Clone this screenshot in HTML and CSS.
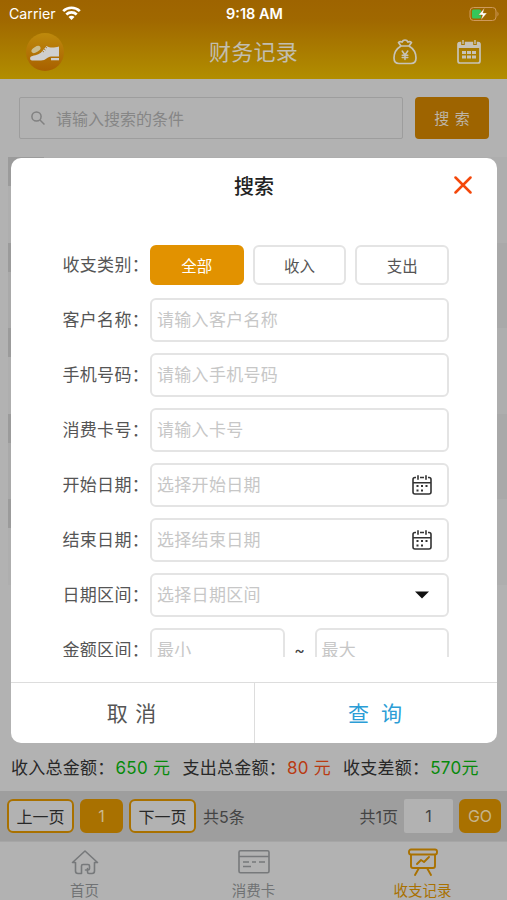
FILE: index.html
```html
<!DOCTYPE html>
<html lang="zh-CN">
<head>
<meta charset="utf-8">
<title>财务记录</title>
<link rel="stylesheet" href="styles.css">
</head>
<body>
<div class="app">
  <header class="top">
    <div class="status">
      <div class="carrier"><span>Carrier</span>
        <svg width="19" height="14" viewBox="0 0 19 14" fill="none" stroke="#fff" stroke-width="2.7"><path d="M1.2 5.1a11.9 11.9 0 0 1 16.6 0M4.3 8.5a7.5 7.5 0 0 1 10.4 0"/><path d="M9.5 14 6.5 11a4.2 4.2 0 0 1 6 0z" fill="#fff" stroke="none"/></svg>
      </div>
      <div class="clock">9:18 AM</div>
      <div class="battery">
        <svg width="31" height="16" viewBox="0 0 31 16"><rect x="1" y="1.5" width="26" height="13" rx="3.5" fill="none" stroke="#cf9a5c" stroke-width="1"/><path d="M28.5 5.5q2 2.500 0 5z" fill="#cf9a5c"/><rect x="3" y="3.500" width="9" height="9" rx="1.500" fill="#35c759"/><path d="m15.500 2-6 7h4l-1.500 5 6-7h-4z" fill="#fff" stroke="#a56a00" stroke-width=".4"/></svg>
      </div>
    </div>
    <div class="nav">
      <div class="logo">
        <svg width="38" height="38" viewBox="0 0 38 38"><defs><linearGradient id="g" x2="0" y2="1"><stop stop-color="#be8a0c"/><stop offset="1" stop-color="#a86000"/></linearGradient></defs><circle cx="19" cy="19" r="19" fill="url(#g)"/><path d="M5 23.500c4-1.500 8-1.500 11-5l4.500-5.500c3.500 2 7 2 12.500.5v10h-8c-3.500 0-5 4-10 4H6c-2 0-2.500-3-1-4z" fill="#cfcfcf"/><ellipse cx="10" cy="16.500" rx="5" ry="2.700" transform="rotate(-30 10 16.500)" fill="#cbbd8f"/><path d="M25 25h8v2.300h-8z" fill="#cfcfcf"/><path d="m16.500 18 1.500 1m0-3 1.500 1m0-3 1.500 1" stroke="#a86800" stroke-width=".8"/></svg>
      </div>
      <h1>财务记录</h1>
      <div class="actions">
        <svg width="24" height="26" viewBox="0 0 24 26" fill="none" stroke="#c7c3b7" stroke-width="1.700" stroke-linejoin="round" stroke-linecap="round"><path d="M8 7C3 10 1 15 1 19q0 5.500 5 5.500h12q5 0 5-5.500c0-4-2-9-7-12zM8 7 5.500 3.500q1.500-1.500 3.500-.5 1-2 3-2t3 2q2-1 3.500.5L16 7"/><path d="m9.200 12 2.800 4 2.800-4M12 16v4.500m-2.800-4.200h5.600m-5.600 2.100h5.600" stroke-width="1.500"/></svg>
        <svg width="24" height="24" viewBox="0 0 24 24"><rect x="1" y="2.500" width="22" height="20.500" rx="2" fill="none" stroke="#c7c3b7" stroke-width="1.700"/><path d="M1 2.500h22V8H1z" fill="#c7c3b7"/><path d="M6 0v5m12-5v5" stroke="#a87800" stroke-width="3.600"/><path d="M6 0v4m12-4v4" stroke="#c7c3b7" stroke-width="1.400"/><path d="M5 11h4v3H5zm5 0h4v3h-4zm5 0h4v3h-4zM5 15.500h4v3H5zm5 0h4v3h-4zm5 0h4v3h-4z" fill="#c7c3b7"/></svg>
      </div>
    </div>
  </header>
  <div class="searchbar">
    <div class="query"><svg width="14" height="14" viewBox="0 0 14 14" fill="none" stroke="#818181" stroke-width="1.500"><circle cx="5.500" cy="5.500" r="4.600"/><path d="m9 9 4.500 4.500"/></svg><span>请输入搜索的条件</span></div>
    <div class="search-btn">搜 索</div>
  </div>
  <main class="list">
    <div class="row"><i></i></div><div class="row alt"><i></i></div><div class="row"><i></i></div><div class="row alt"><i></i></div><div class="row"><i></i></div>
  </main>
  <div class="summary">
    <div class="income">收入总金额：<b class="green">650 元</b></div>
    <div class="expense">支出总金额：<b class="red">80 元</b></div>
    <div>收支差额：<b class="green">570元</b></div>
  </div>
  <div class="pager">
    <div class="page-btn">上一页</div><div class="page-btn current">1</div><div class="page-btn next">下一页</div>
    <span class="count">共5条</span><span class="total">共1页</span>
    <div class="page-input">1</div><div class="page-btn go">GO</div>
  </div>
  <footer class="tabs">
    <div class="tab"><svg width="28" height="26" viewBox="0 0 28 26" fill="none" stroke="#77797b" stroke-width="1.600" stroke-linejoin="round" stroke-linecap="round"><path d="M4.500 13.500h-3L14 2l12.500 11.500h-3V22q0 2.500-2.500 2.500h-3q-1.500 0-1.500-1.500v-3.500M4.500 13.500V22q0 2.500 2.500 2.500h3.500V17q0-1.500 1.500-1.500h5q1.500 0 1.500 1.500v2.500q0 1.500-1.500 1.500h-2.500"/></svg><span>首页</span></div>
    <div class="tab"><svg width="32" height="26" viewBox="0 0 32 26" fill="none" stroke="#77797b" stroke-width="1.600"><rect x="1" y="1.800" width="30" height="22" rx="1.500"/><path d="M1 7.500h30M5 13h6m3 0h4m3 0h6M5 17.500h8"/></svg><span>消费卡</span></div>
    <div class="tab active"><svg width="32" height="29" viewBox="0 0 32 29" fill="none" stroke="#a97100" stroke-width="1.900" stroke-linecap="round" stroke-linejoin="round"><rect x="2" y="1.500" width="28" height="5" rx="2"/><path d="M4 7v11q0 2 2 2h20q2 0 2-2V7M12 20l-4 7m12-7 4 7M10 16l4-4 3 2 5-5"/></svg><span>收支记录</span></div>
  </footer>

  <section class="dialog">
    <div class="dialog-head"><h2>搜索</h2>
      <svg class="close" width="18" height="18" viewBox="0 0 18 18" stroke="#f4480b" stroke-width="2.500" stroke-linecap="round"><path d="m1.500 1.500 15 15m0-15-15 15"/></svg>
    </div>
    <div class="form">
      <div class="field types"><label>收支类别：</label><div class="choices"><div class="choice selected">全部</div><div class="choice">收入</div><div class="choice">支出</div></div></div>
      <div class="field"><label>客户名称：</label><div class="input">请输入客户名称</div></div>
      <div class="field"><label>手机号码：</label><div class="input">请输入手机号码</div></div>
      <div class="field"><label>消费卡号：</label><div class="input">请输入卡号</div></div>
      <div class="field"><label>开始日期：</label><div class="input">选择开始日期<svg class="cal" width="20" height="20" viewBox="0 0 20 20" fill="none" stroke="#333" stroke-width="1.600"><path d="M4 2.500H3q-2 0-2 2V17q0 2 2 2h14q2 0 2-2V4.500q0-2-2-2h-1M8 2.500h4M1 7.800h18M6 .3v4.500M14 .3v4.500"/><path d="M4.500 11h2m2.500 0h2m2.500 0h2m-11 4.500h2m2.500 0h2" stroke-width="2"/></svg></div></div>
      <div class="field"><label>结束日期：</label><div class="input">选择结束日期<svg class="cal" width="20" height="20" viewBox="0 0 20 20" fill="none" stroke="#333" stroke-width="1.600"><path d="M4 2.500H3q-2 0-2 2V17q0 2 2 2h14q2 0 2-2V4.500q0-2-2-2h-1M8 2.500h4M1 7.800h18M6 .3v4.500M14 .3v4.500"/><path d="M4.500 11h2m2.500 0h2m2.500 0h2m-11 4.500h2m2.500 0h2" stroke-width="2"/></svg></div></div>
      <div class="field"><label>日期区间：</label><div class="input">选择日期区间<svg class="caret" width="14" height="8" viewBox="0 0 14 8"><path d="M0 .5h14L7 7.500z" fill="#111"/></svg></div></div>
      <div class="field"><label>金额区间：</label><div class="range"><div class="input">最小</div><span>~</span><div class="input">最大</div></div></div>
    </div>
    <div class="dialog-foot"><div class="cancel">取 消</div><div class="confirm">查 询</div></div>
  </section>
</div>
</body>
</html>
```
FILE: styles.css
```css
* { box-sizing: border-box; }
body { margin: 0; font-family: Inter, "Noto Sans CJK SC", sans-serif; }
h1, h2 { margin: 0; font-weight: 400; }
svg { display: block; flex: none; }
.app { position: relative; width: 507px; height: 900px; display: flex; flex-direction: column; background: #b2b2b2; overflow: hidden; white-space: nowrap; }

.top { height: 79px; flex: none; background: linear-gradient(#9e6400, #a06800 25%, #b28e00); }
.status { height: 28px; display: grid; grid-template-columns: 1fr auto 1fr; align-items: center; padding: 0 7px 0 9px; color: #fff; line-height: 20px; }
.carrier { display: flex; gap: 6px; align-items: center; font-size: 14.200px; }
.carrier svg { margin-top: -2px; }
.clock { font-size: 14.500px; font-weight: 600; }
.battery { display: flex; justify-content: flex-end; }
.nav { height: 48px; display: grid; grid-template-columns: 1fr auto 1fr; align-items: center; padding: 0 26px; }
.nav h1 { font-size: 22px; line-height: 30px; color: #c2beb0; letter-spacing: .3px; }
.actions { display: flex; justify-content: flex-end; align-items: center; gap: 40px; }

.searchbar { height: 78px; flex: none; display: flex; gap: 12px; padding: 18px 18px 0 19px; }
.query { flex: 1; height: 42px; border: 1px solid #9d9d9d; border-radius: 2px; display: flex; align-items: center; gap: 11px; padding-left: 11px; font-size: 16px; color: #868686; }
.query span, .search-btn { padding-bottom: 1px; }
.search-btn { width: 74px; height: 42px; border-radius: 4px; background: #9e6400; color: #bdb5a7; display: flex; align-items: center; justify-content: center; font-size: 15px; word-spacing: 1.500px; }

.list { height: 586px; flex: none; padding-left: 8px; background: #b2b2b2; }
.row { height: 85.500px; background: #aeaeae; }
.row.alt { background: #a9a9a9; }
.row i { display: block; width: 36px; height: 29px; background: #9b9b9b; }

.summary { height: 48px; flex: none; display: flex; align-items: center; padding: 0 0 2px 11px; font-size: 17px; color: #282828; letter-spacing: .25px; }
.summary b { font-weight: 400; margin-left: 1px; }
.income { width: 171.500px; }
.expense { width: 160.500px; }
.green { color: #078a0b; }
.red { color: #b93b13; }

.pager { height: 50px; flex: none; background: #9e9e9e; display: flex; align-items: center; gap: 6px; padding: 0 6px 0 7px; font-size: 16px; color: #444; }
.page-btn { width: 67px; height: 34px; border: 2px solid #a97100; border-radius: 6px; background: #b2b2b2; color: #282828; display: flex; align-items: center; justify-content: center; }
.page-btn.current { width: 43px; background: #a97100; color: #c9b88f; }
.page-btn.go { width: 42px; background: #a97100; color: #c5b48c; }
.count { margin-left: 1px; }
.count, .total { padding-bottom: 1px; }
.total { margin-left: auto; }
.page-input { width: 49px; height: 34px; border-radius: 2px; background: #b2b2b2; display: flex; align-items: center; justify-content: center; }

.tabs { height: 59px; flex: none; display: grid; grid-template-columns: repeat(3, 1fr); border-top: 1px solid #a6a6a6; }
.tab { display: grid; grid-template-rows: 40px 17px; justify-items: center; align-items: center; color: #707274; font-size: 14.500px; line-height: 17px; }
.tab.active { color: #a97100; }

.dialog { position: absolute; left: 11px; top: 158px; width: 486px; height: 585px; border-radius: 10px; background: #fff; display: flex; flex-direction: column; }
.dialog-head { height: 86px; display: grid; grid-template-columns: 1fr auto 1fr; align-items: start; padding: 14px 25px 0; }
.dialog-head h2 { grid-column: 2; font-size: 20px; font-weight: 500; line-height: 30px; color: #222; }
.close { justify-self: end; margin-top: 4px; }
.form { height: 413px; overflow: hidden; padding: 1px 48px 0 51.500px; display: flex; flex-direction: column; gap: 11px; }
.field { height: 44px; flex: none; display: flex; align-items: center; }
.types { height: 42px; align-items: flex-start; }
.field label { width: 87.500px; flex: none; padding-bottom: 3px; font-size: 17px; letter-spacing: .3px; color: #555; }
.types label { line-height: 40px; padding-bottom: 0; }
.choices { flex: 1; display: flex; gap: 9px; }
.choice { flex: 1; height: 40px; border: 2px solid #e4e4e4; border-radius: 6px; padding-bottom: 1px; display: flex; align-items: center; justify-content: center; font-size: 15.500px; color: #555; }
.choice.selected { background: #e29200; border-color: #e29200; color: #fff; }
.input { flex: 1; height: 44px; border: 2px solid #e4e4e4; border-radius: 6px; padding: 0 15px 3px 5px; display: flex; align-items: center; justify-content: space-between; font-size: 17px; letter-spacing: .3px; color: #c7c7c7; }
.cal { margin-top: 3px; }
.caret { margin: 3px 3px 0 0; }
.range { flex: 1; display: flex; align-items: center; color: #444; font-size: 16px; }
.range span { width: 30px; text-align: center; }
.dialog-foot { margin-top: 25px; flex: 1; display: grid; grid-template-columns: 1fr 1fr; border-top: 1px solid #ddd; font-size: 21px; }
.cancel, .confirm { display: flex; align-items: center; justify-content: center; padding: 0 2px 2px 0; color: #555; word-spacing: 1.500px; }
.confirm { border-left: 1px solid #ddd; color: #2b9dd6; word-spacing: 6px; }
```
